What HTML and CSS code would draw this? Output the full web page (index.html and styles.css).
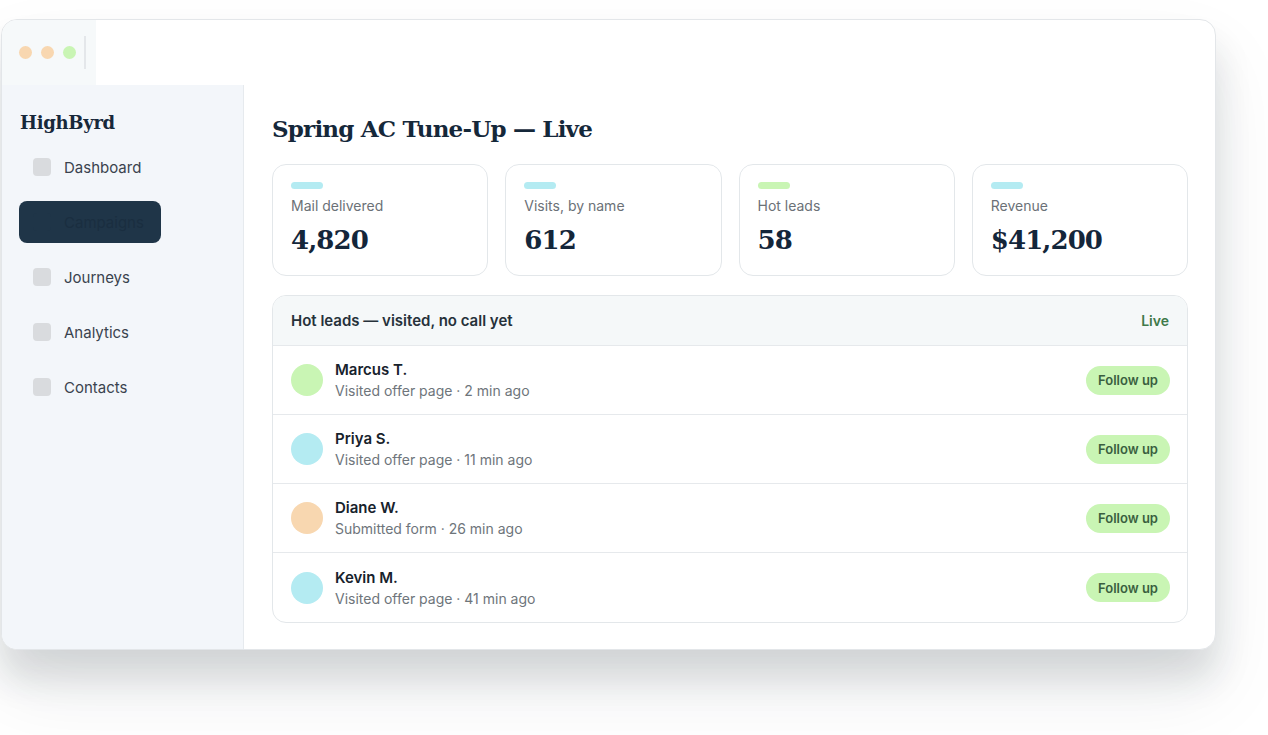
FILE: index.html
```html
<!DOCTYPE html>
<html>
<head>
<meta name="viewport" content="width=device-width, initial-scale=1">
<link rel="stylesheet" href="styles.css">
</head>
<body>

<div class="window">
  <div class="titlebar">
    <div class="dots">
      <span class="dot peach"></span>
      <span class="dot peach"></span>
      <span class="dot green"></span>
      <span class="sep"></span>
    </div>
  </div>

  <div class="app">
    <aside class="sidebar">
      <div class="logo">HighByrd</div>
      <nav class="nav">
        <a class="nav-item"><span class="nav-icon"></span>Dashboard</a>
        <a class="nav-item active"><span class="nav-icon"></span>Campaigns</a>
        <a class="nav-item"><span class="nav-icon"></span>Journeys</a>
        <a class="nav-item"><span class="nav-icon"></span>Analytics</a>
        <a class="nav-item"><span class="nav-icon"></span>Contacts</a>
      </nav>
    </aside>

    <main class="main">
      <h1 class="title">Spring AC Tune-Up — Live</h1>

      <div class="stats">
        <div class="stat">
          <span class="bar cyan"></span>
          <div class="stat-label">Mail delivered</div>
          <div class="stat-value">4,820</div>
        </div>
        <div class="stat">
          <span class="bar cyan"></span>
          <div class="stat-label">Visits, by name</div>
          <div class="stat-value">612</div>
        </div>
        <div class="stat">
          <span class="bar green"></span>
          <div class="stat-label">Hot leads</div>
          <div class="stat-value">58</div>
        </div>
        <div class="stat">
          <span class="bar cyan"></span>
          <div class="stat-label">Revenue</div>
          <div class="stat-value">$41,200</div>
        </div>
      </div>

      <div class="leads">
        <div class="leads-head">
          <span>Hot leads — visited, no call yet</span>
          <span class="live">Live</span>
        </div>
        <div class="lead">
          <span class="avatar green"></span>
          <div class="lead-info">
            <div class="lead-name">Marcus T.</div>
            <div class="lead-meta">Visited offer page · 2 min ago</div>
          </div>
          <button class="follow">Follow up</button>
        </div>
        <div class="lead">
          <span class="avatar cyan"></span>
          <div class="lead-info">
            <div class="lead-name">Priya S.</div>
            <div class="lead-meta">Visited offer page · 11 min ago</div>
          </div>
          <button class="follow">Follow up</button>
        </div>
        <div class="lead">
          <span class="avatar peach"></span>
          <div class="lead-info">
            <div class="lead-name">Diane W.</div>
            <div class="lead-meta">Submitted form · 26 min ago</div>
          </div>
          <button class="follow">Follow up</button>
        </div>
        <div class="lead">
          <span class="avatar cyan"></span>
          <div class="lead-info">
            <div class="lead-name">Kevin M.</div>
            <div class="lead-meta">Visited offer page · 41 min ago</div>
          </div>
          <button class="follow">Follow up</button>
        </div>
      </div>
    </main>
  </div>
</div>

</body>
</html>
```

FILE: styles.css
```css
/* Page */
body {
  margin: 0;
  padding: 19px 0 85px 1px;
  min-height: 735px;
  box-sizing: border-box;
  background: #fff;
  font-family: Inter, "Noto Sans", sans-serif;
  color: #17222c;
}

/* Browser-like window frame */
.window {
  width: 1215px;
  height: 631px;
  box-sizing: border-box;
  border: 1px solid #e3e6e9;
  border-radius: 16px;
  background: #fff;
  overflow: hidden;
  box-shadow: 0 28px 36px rgba(25, 40, 50, 0.14), 0 40px 80px rgba(25, 40, 50, 0.08);
  display: flex;
  flex-direction: column;
}

.titlebar {
  height: 65px;
  display: flex;
  flex-shrink: 0;
}

.dots {
  width: 94px;
  background: #f6f9fa;
  display: flex;
  align-items: center;
  gap: 9px;
  padding-left: 17px;
  box-sizing: border-box;
}

.dot {
  width: 13px;
  height: 13px;
  border-radius: 50%;
}

.dot.peach { background: #f8d7b0; }
.dot.green { background: #c9f5b4; }

.sep {
  width: 2px;
  height: 33px;
  background: #e4e7ea;
  margin-left: -1px;
}

.app {
  flex: 1;
  display: flex;
  min-height: 0;
}

/* Sidebar */
.sidebar {
  width: 242px;
  flex-shrink: 0;
  background: #f3f6fa;
  border-right: 1px solid #e6eaee;
  padding: 26px 0 0 17px;
  box-sizing: border-box;
}

.logo {
  margin-left: 1px;
  font-family: "DejaVu Serif", "Liberation Serif", serif;
  font-weight: bold;
  font-size: 18px;
  letter-spacing: -0.3px;
  color: #17283a;
  line-height: 24px;
}

.nav {
  margin-top: 11px;
  display: flex;
  flex-direction: column;
  gap: 13px;
}

.nav-item {
  width: 142px;
  height: 42px;
  box-sizing: border-box;
  padding-left: 14px;
  border-radius: 8px;
  display: flex;
  align-items: center;
  gap: 13px;
  font-size: 15px;
  color: #3a434e;
}

.nav-icon {
  width: 18px;
  height: 18px;
  border-radius: 4px;
  background: #d9dbde;
}

.nav-item.active {
  background: #1f3548;
  color: #1a2e40;
}

.nav-item.active .nav-icon {
  background: #1f3548;
}

/* Main area */
.main {
  flex: 1;
  padding: 28px 27px 0 28px;
  box-sizing: border-box;
}

.title {
  margin: 0;
  font-family: "DejaVu Serif", "Liberation Serif", serif;
  font-weight: bold;
  font-size: 23px;
  letter-spacing: -0.8px;
  line-height: 32px;
  color: #15283a;
}

.stats {
  margin-top: 19px;
  display: grid;
  grid-template-columns: repeat(4, 1fr);
  gap: 17px;
}

.stat {
  height: 112px;
  box-sizing: border-box;
  border: 1px solid #e3e7ea;
  border-radius: 14px;
  padding: 17px 18px 0;
}

.bar {
  display: block;
  width: 32px;
  height: 7px;
  border-radius: 4px;
}

.bar.cyan { background: #b4ebf2; }
.bar.green { background: #c9f5b4; }

.stat-label {
  margin-top: 8px;
  font-size: 14px;
  color: #6b7177;
  line-height: 18px;
}

.stat-value {
  margin-top: 9px;
  font-family: "DejaVu Serif", "Liberation Serif", serif;
  font-weight: bold;
  font-size: 26px;
  letter-spacing: -0.9px;
  line-height: 32px;
  color: #14263a;
}

/* Hot leads table */
.leads {
  margin-top: 19px;
  border: 1px solid #e3e7ea;
  border-radius: 14px;
  overflow: hidden;
}

.leads-head {
  height: 49px;
  background: #f5f8f9;
  border-bottom: 1px solid #e6e9ec;
  display: flex;
  align-items: center;
  justify-content: space-between;
  padding: 0 18px;
  font-size: 15px;
  font-weight: 600;
  color: #26313a;
}

.live {
  font-size: 14px;
  color: #3f7a4a;
}

.lead {
  height: 68px;
  display: flex;
  align-items: center;
  gap: 12px;
  padding: 0 17px 0 18px;
  border-bottom: 1px solid #e6e9ec;
}

.lead:last-child {
  border-bottom: none;
  height: 69px;
}

.avatar {
  width: 32px;
  height: 32px;
  border-radius: 50%;
  flex-shrink: 0;
}

.avatar.green { background: #c9f5b4; }
.avatar.cyan { background: #b4ebf2; }
.avatar.peach { background: #f8d7b0; }

.lead-info {
  flex: 1;
}

.lead-name {
  font-size: 15px;
  font-weight: 600;
  color: #17222c;
  line-height: 20px;
}

.lead-meta {
  margin-top: 2px;
  font-size: 14px;
  color: #6e757b;
  line-height: 18px;
}

.follow {
  border: none;
  background: #c9f5b4;
  border-radius: 15px;
  height: 29px;
  width: 84px;
  font-family: Inter, sans-serif;
  font-size: 13px;
  font-weight: 600;
  color: #3a5f40;
  padding: 0;
}
```
